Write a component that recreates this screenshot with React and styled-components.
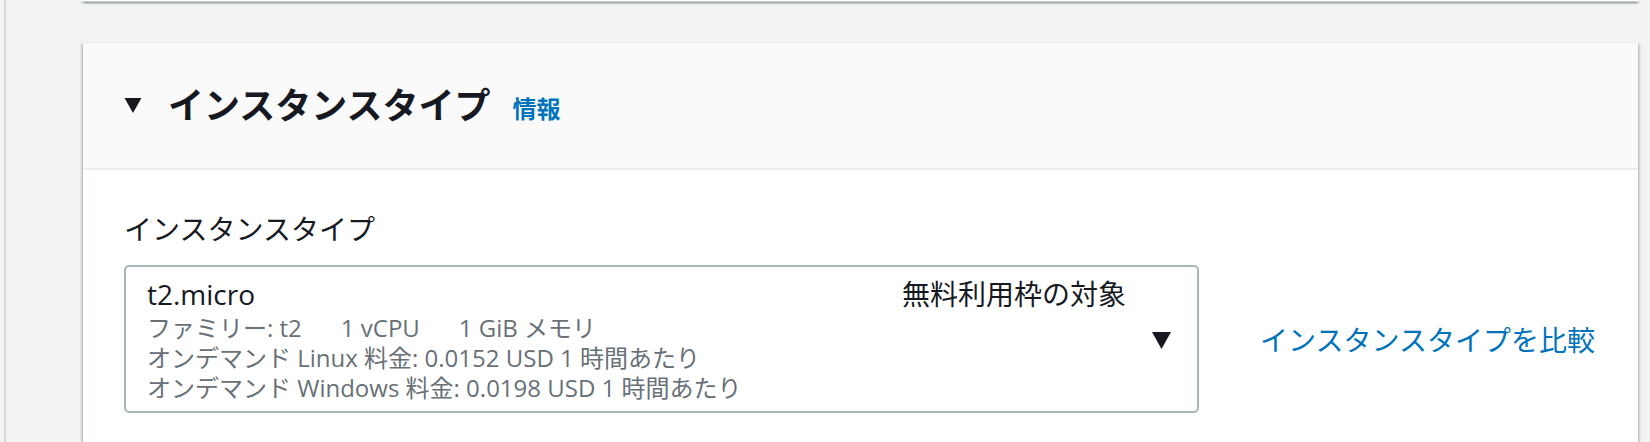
import React from 'react';
import styled, { createGlobalStyle } from 'styled-components';

const GlobalStyle = createGlobalStyle`
    html, body {
        margin: 0;
        padding: 0;
        overflow: hidden;
        background: #f2f3f3;
        font-family: "Open Sans", "Noto Sans CJK JP", sans-serif;
        color: #16191f;
    }
`;

function Caret({ width, height }) {
    return (
        <svg width={width} height={height} viewBox="0 0 18 16" aria-hidden="true">
            <polygon points="0,0 18,0 9,16" fill="#16191f" />
        </svg>
    );
}

function App() {
    return (
        <>
            <GlobalStyle />
            <Shell>
                <Main>
                    <PrevCard />
                    <Card>
                        <CardHeader>
                            <Caret width={18} height={15} />
                            <Heading>インスタンスタイプ</Heading>
                            <InfoLink href="#">情報</InfoLink>
                        </CardHeader>
                        <CardBody>
                            <Label>インスタンスタイプ</Label>
                            <Row>
                                <Select>
                                    <Option>
                                        <Title>t2.micro</Title>
                                        <Desc>
                                            <Spec>ファミリー: t2</Spec>
                                            <Spec>1 vCPU</Spec>
                                            <Spec>1 GiB メモリ</Spec>
                                        </Desc>
                                        <Desc>オンデマンド Linux 料金: 0.0152 USD 1 時間あたり</Desc>
                                        <Desc>オンデマンド Windows 料金: 0.0198 USD 1 時間あたり</Desc>
                                    </Option>
                                    <Badge>無料利用枠の対象</Badge>
                                    <SelectCaret>
                                        <Caret width={19} height={17} />
                                    </SelectCaret>
                                </Select>
                                <CompareLink href="#">インスタンスタイプを比較</CompareLink>
                            </Row>
                        </CardBody>
                    </Card>
                </Main>
            </Shell>
        </>
    );
}

const Shell = styled.div`
    padding-left: 4px;
    min-height: 442px;
    box-sizing: border-box;
`;

const Main = styled.main`
    border-left: 2px solid #d5dbdb;
    min-height: 442px;
    padding: 0 12px 0 77px;
    box-sizing: border-box;
`;

const PrevCard = styled.div`
    height: 1px;
    background: #ffffff;
    box-shadow: 0 2px 2px 0 rgba(0, 28, 36, 0.45), 2px 2px 2px 0 rgba(0, 28, 36, 0.2), -2px 2px 2px 0 rgba(0, 28, 36, 0.2);
    margin-bottom: 41px;
`;

const Card = styled.section`
    background: #ffffff;
    box-shadow: 0 2px 2px 0 rgba(0, 28, 36, 0.3), 2px 2px 2px 0 rgba(0, 28, 36, 0.15), -2px 2px 2px 0 rgba(0, 28, 36, 0.15);
    border-top: 1px solid #eaeded;
`;

const CardHeader = styled.header`
    display: flex;
    align-items: center;
    background: #fafafa;
    border-bottom: 2px solid #eaeded;
    height: 127px;
    box-sizing: border-box;
    padding: 0 41px;
`;

const Heading = styled.h2`
    margin: 0 22px 0 26px;
    font-size: 36px;
    line-height: 44px;
    font-weight: 700;
    color: #16191f;
`;

const InfoLink = styled.a`
    font-size: 24px;
    font-weight: 700;
    color: #0073bb;
    text-decoration: none;
    margin-top: 4px;
`;

const CardBody = styled.div`
    padding: 39px 41px 40px;
`;

const Label = styled.div`
    font-size: 28px;
    line-height: 40px;
    margin-bottom: 16px;
`;

const Row = styled.div`
    display: flex;
    align-items: center;
    gap: 61px;
`;

const Select = styled.div`
    display: flex;
    align-items: flex-start;
    width: 1075px;
    height: 148px;
    box-sizing: border-box;
    border: 2px solid #aab7b8;
    border-radius: 5px;
    padding: 8px 26px 0 21px;
`;

const Option = styled.div`
    flex: 1;
`;

const Title = styled.div`
    font-size: 28px;
    line-height: 38px;
    color: #16191f;
`;

const Desc = styled.div`
    font-size: 24px;
    line-height: 30px;
    color: #687078;
    white-space: nowrap;
`;

const Spec = styled.span`
    &:not(:last-child) {
        margin-right: 39px;
    }
`;

const Badge = styled.div`
    font-size: 28px;
    line-height: 38px;
    color: #16191f;
`;

const SelectCaret = styled.div`
    align-self: center;
    display: flex;
    margin-left: 26px;
    margin-top: -6px;
`;

const CompareLink = styled.a`
    font-size: 28px;
    color: #0073bb;
    text-decoration: none;
    white-space: nowrap;
`;

export default App;
